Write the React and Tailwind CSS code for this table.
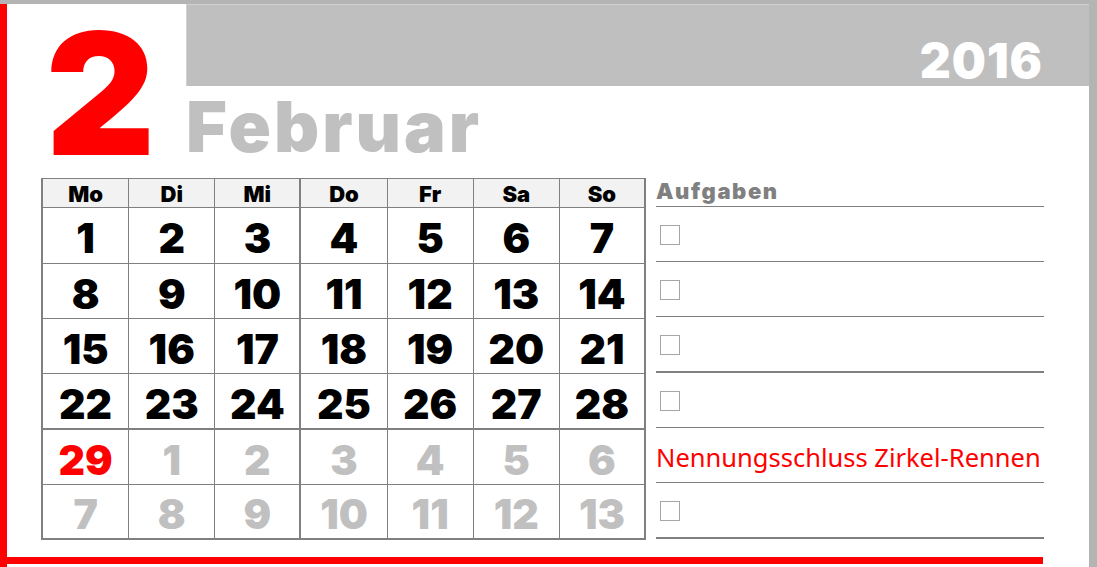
import React from "react";

const heavy = { fontFamily: "Inter, 'Liberation Sans', sans-serif" };

const weeks = [
  [1, 2, 3, 4, 5, 6, 7],
  [8, 9, 10, 11, 12, 13, 14],
  [15, 16, 17, 18, 19, 20, 21],
  [22, 23, 24, 25, 26, 27, 28],
  [29, 1, 2, 3, 4, 5, 6],
  [7, 8, 9, 10, 11, 12, 13],
];

const dayNames = ["Mo", "Di", "Mi", "Do", "Fr", "Sa", "So"];

const rowHeights = ["h-[56px]", "h-[55px]", "h-[55px]", "h-[56px]", "h-[55px]", "h-[55px]"];

const Checkbox = () => <div className="w-[20px] h-[20px] border border-[#a6a6a6] bg-white" />;

const App = () => {
  return (
    <div className="w-[1097px] h-[567px] bg-[#b4b4b4] pt-[4px] pr-[8px] overflow-hidden">
      <div className="h-full bg-white border-l-[7px] border-[#ff0000] flex flex-col">
        {/* header */}
        <div className="flex h-[174px]">
          <div className="w-[179px] flex justify-center items-start pt-[14px]">
            <span className="text-[#ff0000] font-black text-[170px] leading-[150px] ml-[8px]" style={heavy}>
              2
            </span>
          </div>
          <div className="flex-1 flex flex-col">
            <div className="h-[82px] bg-[#bfbfbf] border-t border-l border-[#d0d0d0] flex items-end justify-end pr-[46px] pb-[1px]">
              <span className="text-white font-black text-[48px] leading-none tracking-[1px]" style={heavy}>
                2016
              </span>
            </div>
            <div className="text-[#c0c0c0] font-black text-[70px] leading-none mt-[6px] tracking-[3px]" style={heavy}>
              Februar
            </div>
          </div>
        </div>

        {/* body */}
        <div className="flex pl-[34px] gap-[10px]">
          <div className="w-[605px] border-l-2 border-t border-[#808080] grid grid-cols-7" style={heavy}>
            {dayNames.map((d, i) => (
              <div
                key={d}
                className={`h-[29px] bg-[#f2f2f2] border-b border-r border-[#808080] flex items-center justify-center pt-[2px] text-[22px] leading-none font-black text-black ${i === 2 ? "border-r-2" : ""} ${i === 6 ? "border-r-2" : ""}`}
              >
                {d}
              </div>
            ))}
            {weeks.map((w, r) =>
              w.map((n, i) => {
                let color = "text-black";
                if (r === 4 && i === 0) color = "text-[#ff0000]";
                else if (r >= 4) color = "text-[#c0c0c0]";
                return (
                  <div
                    key={r + "-" + i}
                    className={`${rowHeights[r]} border-b border-r border-[#808080] flex items-center justify-center pt-[6px] text-[41px] font-black leading-none ${color} ${i === 2 || i === 6 ? "border-r-2" : ""} ${r === 3 || r === 5 ? "border-b-2" : ""}`}
                  >
                    {n}
                  </div>
                );
              })
            )}
          </div>

          <div className="w-[388px] flex flex-col">
            <div className="h-[29px] border-b border-[#808080] text-[#808080] text-[22px] font-black leading-none pt-[2px] tracking-[1.6px]" style={heavy}>
              Aufgaben
            </div>
            <div className="h-[55px] border-b border-[#808080] flex items-center pl-[4px] pt-[2px]">
              <Checkbox />
            </div>
            <div className="h-[55px] border-b border-[#808080] flex items-center pl-[4px] pt-[2px]">
              <Checkbox />
            </div>
            <div className="h-[56px] border-b-2 border-[#808080] flex items-center pl-[4px] pt-[2px]">
              <Checkbox />
            </div>
            <div className="h-[55px] border-b border-[#808080] flex items-center pl-[4px] pt-[2px]">
              <Checkbox />
            </div>
            <div
              className="h-[55px] border-b border-[#808080] flex items-center pt-[6px] text-[#ff0000] text-[25.5px] leading-none whitespace-nowrap"
              style={{ fontFamily: "'Noto Sans', 'Open Sans', sans-serif" }}
            >
              Nennungsschluss Zirkel-Rennen
            </div>
            <div className="h-[56px] border-b-2 border-[#808080] flex items-center pl-[4px] pt-[2px]">
              <Checkbox />
            </div>
          </div>
        </div>

        <div className="mt-[17px] h-[7px] w-[1036px] bg-[#ff0000]" />
      </div>
    </div>
  );
};

export default App;
